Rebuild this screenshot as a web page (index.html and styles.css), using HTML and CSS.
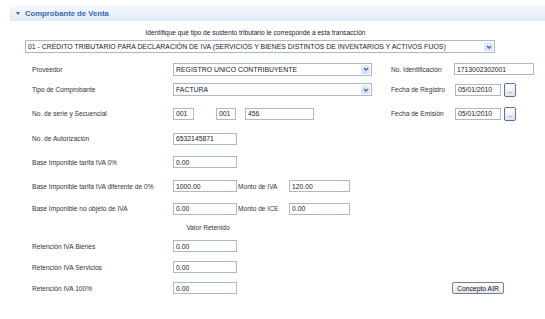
FILE: index.html
```html
<!DOCTYPE html>
<html lang="es">
<head>
    <meta charset="UTF-8">
    <title>Comprobante de Venta</title>
    <link rel="stylesheet" href="styles.css">
</head>
<body>
    <div class="panel">
        <div class="panel-header">
            <span class="caret"></span>
            <span>Comprobante de Venta</span>
        </div>

        <p class="hint">Identifique qué tipo de sustento tributario le corresponde a esta transacción</p>

        <div class="combo combo-wide">
            <span>01 - CRÉDITO TRIBUTARIO PARA DECLARACIÓN DE IVA (SERVICIOS Y BIENES DISTINTOS DE INVENTARIOS Y ACTIVOS FIJOS)</span>
            <span class="combo-arrow">
                <svg width="8" height="8" viewBox="0 0 8 8" fill="none" stroke="#4a69b0" stroke-width="1.4">
                    <path d="M2 3l2 2 2-2"></path>
                </svg>
            </span>
        </div>

        <div class="form-grid">
            <!-- fila 1 -->
            <label class="col-a">Proveedor</label>
            <div class="combo col-span">
                <span>REGISTRO UNICO CONTRIBUYENTE</span>
                <span class="combo-arrow">
                    <svg width="8" height="8" viewBox="0 0 8 8" fill="none" stroke="#4a69b0" stroke-width="1.4">
                        <path d="M2 3l2 2 2-2"></path>
                    </svg>
                </span>
            </div>
            <label class="col-f">No. Identificación</label>
            <input class="field field-id col-g" type="text" value="1713002302001">

            <!-- fila 2 -->
            <label class="col-a">Tipo de Comprobante</label>
            <div class="combo col-span">
                <span>FACTURA</span>
                <span class="combo-arrow">
                    <svg width="8" height="8" viewBox="0 0 8 8" fill="none" stroke="#4a69b0" stroke-width="1.4">
                        <path d="M2 3l2 2 2-2"></path>
                    </svg>
                </span>
            </div>
            <label class="col-f">Fecha de Registro</label>
            <div class="date-group col-g">
                <input class="field field-date" type="text" value="05/01/2010">
                <button class="pick">...</button>
            </div>

            <!-- fila 3 -->
            <label class="col-a">No. de serie y Secuencial</label>
            <div class="serie col-serie">
                <input class="field serie-a" type="text" value="001">
                <input class="field serie-b" type="text" value="001">
                <input class="field serie-c" type="text" value="456">
            </div>
            <label class="col-f">Fecha de Emisión</label>
            <div class="date-group col-g">
                <input class="field field-date" type="text" value="05/01/2010">
                <button class="pick">...</button>
            </div>

            <!-- fila 4 -->
            <label class="col-a">No. de Autorización</label>
            <input class="field field-num col-b" type="text" value="6532145871">

            <!-- fila 5 -->
            <label class="col-a">Base Imponible tarifa IVA 0%</label>
            <input class="field field-num col-b" type="text" value="0.00">

            <!-- fila 6 -->
            <label class="col-a">Base Imponible tarifa IVA diferente de 0%</label>
            <input class="field field-num col-b" type="text" value="1000.00">
            <label class="col-c">Monto de IVA</label>
            <input class="field field-monto col-d" type="text" value="120.00">

            <!-- fila 7 -->
            <label class="col-a">Base Imponible no objeto de IVA</label>
            <input class="field field-num col-b" type="text" value="0.00">
            <label class="col-c">Monto de ICE</label>
            <input class="field field-monto col-d" type="text" value="0.00">

            <!-- fila 8 -->
            <span class="col-b caption">Valor Retenido</span>

            <!-- fila 9 -->
            <label class="col-a">Retención IVA Bienes</label>
            <input class="field field-num col-b" type="text" value="0.00">

            <!-- fila 10 -->
            <label class="col-a">Retención IVA Servicios</label>
            <input class="field field-num col-b" type="text" value="0.00">

            <!-- fila 11 -->
            <label class="col-a">Retención IVA 100%</label>
            <input class="field field-num col-b" type="text" value="0.00">
            <button class="btn col-g">Concepto AIR</button>
        </div>
    </div>
</body>
</html>
```

FILE: styles.css
```css
body {
    margin: 0;
    padding: 0;
    font-family: "Liberation Sans", Arial, sans-serif;
    font-size: 6.6px;
    color: #333333;
    background-color: #ffffff;
}

.panel {
    padding-top: 5px;
}

.panel-header {
    margin-left: 10px;
    height: 16px;
    padding-left: 6px;
    display: flex;
    align-items: center;
    gap: 5px;
    background: linear-gradient(to bottom, #f8fafd, #e3eaf6);
    color: #3767b8;
    font-weight: bold;
    font-size: 7.7px;
}

.caret {
    width: 0;
    height: 0;
    border-left: 2.5px solid transparent;
    border-right: 2.5px solid transparent;
    border-top: 3px solid #3767b8;
}

.hint {
    margin: 7px 0 0 25px;
    width: 461px;
    padding-right: 9px;
    line-height: 10px;
    text-align: center;
    color: #222222;
}

/* combos */
.combo {
    box-sizing: border-box;
    height: 13px;
    border: 1px solid #a7b8d0;
    padding-left: 2px;
    display: flex;
    align-items: center;
    justify-content: space-between;
    font-size: 6.9px;
    color: #222222;
    background-color: #ffffff;
    white-space: nowrap;
}

.combo-wide {
    margin: 2px 0 0 25px;
    width: 470px;
}

.combo-arrow {
    width: 9px;
    height: 9px;
    margin-right: 1px;
    border-radius: 2px;
    background: linear-gradient(to bottom, #e8edf9, #d3ddf2);
    display: flex;
    justify-content: center;
    align-items: center;
}

/* formulario */
.form-grid {
    display: grid;
    grid-template-columns: 141px 65px 51px 61px 41px 63px 86px;
    grid-template-rows: 19px 22.5px 25.5px 24px 23.5px 24.5px 20.5px 17px 20.5px 21.5px 20px;
    align-items: center;
    padding-left: 32px;
    margin-top: 6.5px;
}

.col-a { grid-column: 1; }
.col-b { grid-column: 2; }
.col-c { grid-column: 3; }
.col-d { grid-column: 4; }
.col-f { grid-column: 6; }
.col-g { grid-column: 7; }
.col-span { grid-column: 2 / 6; width: 199px; }
.col-serie { grid-column: 2 / 5; }

.caption {
    justify-self: center;
    padding-left: 5px;
}

.field {
    box-sizing: border-box;
    height: 12px;
    margin: 0;
    border: 1px solid #a9bad0;
    padding: 0 2px;
    font-family: inherit;
    font-size: 6.8px;
    color: #222222;
    background-color: #ffffff;
    outline: none;
}

.field-num {
    width: 64px;
}

.field-monto {
    width: 61px;
}

.field-id {
    width: 80px;
}

.field-date {
    width: 46px;
    margin-left: 1px;
}

.serie {
    display: flex;
    align-items: center;
}

.serie-a {
    width: 21px;
}

.serie-b {
    width: 20px;
    margin-left: 22px;
}

.serie-c {
    width: 69px;
    margin-left: 9px;
}

.date-group {
    display: flex;
    align-items: center;
    gap: 3px;
}

.pick {
    box-sizing: border-box;
    width: 12px;
    height: 14px;
    padding: 0 0 2px;
    border: 1px solid #5b7092;
    border-radius: 2px;
    background: linear-gradient(to bottom, #ffffff, #dde3ed);
    font-family: inherit;
    font-size: 6px;
    line-height: 1;
    color: #111111;
    display: flex;
    justify-content: center;
    align-items: flex-end;
}

.btn {
    justify-self: start;
    box-sizing: border-box;
    height: 12px;
    margin-left: -2px;
    padding: 0 4px;
    border: 1px solid #6d7f99;
    border-radius: 2px;
    background: linear-gradient(to bottom, #ffffff, #e3e7ee);
    font-family: inherit;
    font-size: 6.8px;
    color: #111111;
}
```
